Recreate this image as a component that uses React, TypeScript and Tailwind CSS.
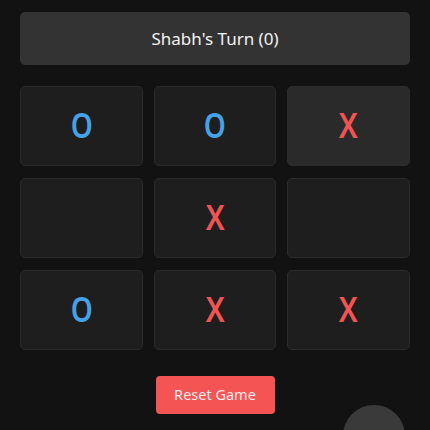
import React from "react";

type Mark = "O" | "X" | "";

const board: Mark[] = ["O", "O", "X", "", "X", "", "O", "X", "X"];

export default function App() {
  return (
    <div
      className="relative h-[430px] w-[430px] overflow-hidden bg-[#121212] px-5 pt-3"
      style={{ fontFamily: '"Noto Sans", "DejaVu Sans", sans-serif' }}
    >
      {/* Turn banner */}
      <div className="flex h-[53px] items-center justify-center rounded-[5px] bg-[#333333] text-[17px] text-[#f2f2f2]">
        Shabh's Turn (0)
      </div>

      {/* Board */}
      <div className="mt-[21px] grid grid-cols-3 gap-x-[11px] gap-y-[12px]">
        {board.map((mark, i) => (
          <div
            key={i}
            className={
              "flex h-[80px] items-center justify-center rounded-[5px] border border-[#2b2b2b] pb-[3px] " +
              (i === 2 ? "bg-[#2a2a2a]" : "bg-[#1e1e1e]")
            }
          >
            {mark === "O" && (
              <span className="inline-block scale-x-[0.8] text-[35px] font-semibold leading-none text-[#46a2e6]">
                O
              </span>
            )}
            {mark === "X" && (
              <span className="inline-block scale-x-[0.85] text-[35px] font-semibold leading-none text-[#f25454]">
                X
              </span>
            )}
          </div>
        ))}
      </div>

      {/* Reset */}
      <div className="mt-[26px] flex justify-center">
        <button className="h-[38px] w-[119px] rounded-[4px] bg-[#f45454] text-[14.5px] text-[#fbeaea]">
          Reset Game
        </button>
      </div>

      {/* Floating button */}
      <div className="absolute left-[343px] top-[405px] h-[62px] w-[62px] rounded-full bg-[#3a3a3a]" />
    </div>
  );
}
